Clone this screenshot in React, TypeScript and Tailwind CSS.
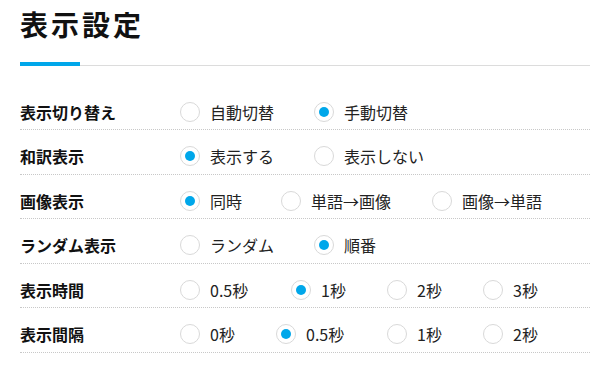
type Option = { label: string; width?: string };

type Row = {
  title: string;
  options: Option[];
  selected: number;
};

const rows: Row[] = [
  { title: '表示切り替え', options: [{ label: '自動切替', width: 'w-[134px]' }, { label: '手動切替' }], selected: 1 },
  { title: '和訳表示', options: [{ label: '表示する', width: 'w-[134px]' }, { label: '表示しない' }], selected: 0 },
  {
    title: '画像表示',
    options: [
      { label: '同時', width: 'w-[101px]' },
      { label: '単語→画像', width: 'w-[151px]' },
      { label: '画像→単語' },
    ],
    selected: 0,
  },
  { title: 'ランダム表示', options: [{ label: 'ランダム', width: 'w-[134px]' }, { label: '順番' }], selected: 1 },
  {
    title: '表示時間',
    options: [
      { label: '0.5秒', width: 'w-[111px]' },
      { label: '1秒', width: 'w-[96px]' },
      { label: '2秒', width: 'w-[96px]' },
      { label: '3秒' },
    ],
    selected: 1,
  },
  {
    title: '表示間隔',
    options: [
      { label: '0秒', width: 'w-[96px]' },
      { label: '0.5秒', width: 'w-[111px]' },
      { label: '1秒', width: 'w-[96px]' },
      { label: '2秒' },
    ],
    selected: 1,
  },
];

function Radio({ checked }: { checked: boolean }) {
  return (
    <span className="flex h-[20px] w-[20px] shrink-0 items-center justify-center rounded-full border border-[#d9d9d9] bg-white">
      {checked && <span className="h-[10px] w-[10px] rounded-full bg-[#00a7ea]" />}
    </span>
  );
}

export default function App() {
  return (
    <div
      className="min-h-[372px] w-[590px] bg-white pl-5 text-[#111]"
      style={{ fontFamily: '"Noto Sans CJK JP", "Noto Sans", sans-serif' }}
    >
      <h1 className="mt-[4px] h-[40px] text-[28px] font-bold leading-[40px] tracking-[3px]">表示設定</h1>

      <div className="mt-[18px] flex items-end">
        <div className="h-[4px] w-[60px] bg-[#00a7ea]" />
        <div className="h-px flex-1 bg-[#dcdcdc]" />
      </div>

      <div className="mt-[19.5px]">
        {rows.map(row => (
          <div
            key={row.title}
            className="flex h-[44.5px] items-start border-b border-dotted border-[#c8c8c8] pt-[16px]"
          >
            <div className="w-[160px] shrink-0 text-[16px] font-bold leading-[20px]">{row.title}</div>
            <div className="flex items-center">
              {row.options.map((opt, i) => (
                <label key={opt.label} className={`flex items-center ${opt.width ?? ''}`}>
                  <Radio checked={i === row.selected} />
                  <span className="ml-[10px] whitespace-nowrap text-[16px] leading-[20px] text-[#222]">
                    {opt.label}
                  </span>
                </label>
              ))}
            </div>
          </div>
        ))}
      </div>
    </div>
  );
}
